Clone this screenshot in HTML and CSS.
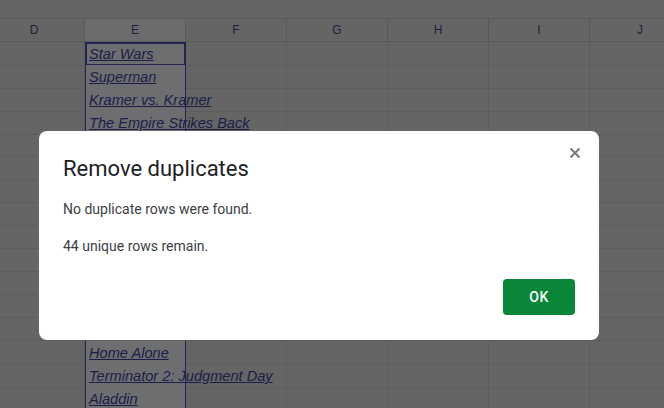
FILE: index.html
```html
<!DOCTYPE html>
<html>
<head>
<meta charset="utf-8">
<link rel="stylesheet" href="styles.css">
</head>
<body>
<div class="sheet">
  <div class="topbar"></div>
  <div class="row head">
    <div class="cell">D</div>
    <div class="cell sel">E</div>
    <div class="cell">F</div>
    <div class="cell">G</div>
    <div class="cell">H</div>
    <div class="cell">I</div>
    <div class="cell">J</div>
  </div>
  <div class="row"><div class="cell"></div><div class="cell sel active"><span class="t">Star Wars</span></div><div class="cell"></div><div class="cell"></div><div class="cell"></div><div class="cell"></div><div class="cell"></div></div>
  <div class="row"><div class="cell"></div><div class="cell sel"><span class="t">Superman</span></div><div class="cell"></div><div class="cell"></div><div class="cell"></div><div class="cell"></div><div class="cell"></div></div>
  <div class="row"><div class="cell"></div><div class="cell sel"><span class="t">Kramer vs. Kramer</span></div><div class="cell"></div><div class="cell"></div><div class="cell"></div><div class="cell"></div><div class="cell"></div></div>
  <div class="row"><div class="cell"></div><div class="cell sel"><span class="t">The Empire Strikes Back</span></div><div class="cell"></div><div class="cell"></div><div class="cell"></div><div class="cell"></div><div class="cell"></div></div>
  <div class="row"><div class="cell"></div><div class="cell sel"></div><div class="cell"></div><div class="cell"></div><div class="cell"></div><div class="cell"></div><div class="cell"></div></div>
  <div class="row"><div class="cell"></div><div class="cell sel"></div><div class="cell"></div><div class="cell"></div><div class="cell"></div><div class="cell"></div><div class="cell"></div></div>
  <div class="row"><div class="cell"></div><div class="cell sel"></div><div class="cell"></div><div class="cell"></div><div class="cell"></div><div class="cell"></div><div class="cell"></div></div>
  <div class="row"><div class="cell"></div><div class="cell sel"></div><div class="cell"></div><div class="cell"></div><div class="cell"></div><div class="cell"></div><div class="cell"></div></div>
  <div class="row"><div class="cell"></div><div class="cell sel"></div><div class="cell"></div><div class="cell"></div><div class="cell"></div><div class="cell"></div><div class="cell"></div></div>
  <div class="row"><div class="cell"></div><div class="cell sel"></div><div class="cell"></div><div class="cell"></div><div class="cell"></div><div class="cell"></div><div class="cell"></div></div>
  <div class="row"><div class="cell"></div><div class="cell sel"></div><div class="cell"></div><div class="cell"></div><div class="cell"></div><div class="cell"></div><div class="cell"></div></div>
  <div class="row"><div class="cell"></div><div class="cell sel"></div><div class="cell"></div><div class="cell"></div><div class="cell"></div><div class="cell"></div><div class="cell"></div></div>
  <div class="row"><div class="cell"></div><div class="cell sel"></div><div class="cell"></div><div class="cell"></div><div class="cell"></div><div class="cell"></div><div class="cell"></div></div>
  <div class="row"><div class="cell"></div><div class="cell sel"><span class="t">Home Alone</span></div><div class="cell"></div><div class="cell"></div><div class="cell"></div><div class="cell"></div><div class="cell"></div></div>
  <div class="row"><div class="cell"></div><div class="cell sel"><span class="t">Terminator 2: Judgment Day</span></div><div class="cell"></div><div class="cell"></div><div class="cell"></div><div class="cell"></div><div class="cell"></div></div>
  <div class="row"><div class="cell"></div><div class="cell sel"><span class="t">Aladdin</span></div><div class="cell"></div><div class="cell"></div><div class="cell"></div><div class="cell"></div><div class="cell"></div></div>
</div>

<div class="dialog" role="dialog">
  <div class="dlg-head">
    <h1 class="title">Remove duplicates</h1>
    <button class="close" aria-label="Close">
      <svg width="12" height="12" viewBox="0 0 12 12"><path d="M1.5 1.5 L10.5 10.5 M10.5 1.5 L1.5 10.5" stroke="#7a7a7a" stroke-width="2" fill="none"/></svg>
    </button>
  </div>
  <p class="msg">No duplicate rows were found.</p>
  <p class="msg">44 unique rows remain.</p>
  <div class="actions">
    <button class="ok">OK</button>
  </div>
</div>
</body>
</html>
```

FILE: styles.css
```css
html, body {
  margin: 0;
  padding: 0;
  width: 664px;
  height: 408px;
  overflow: hidden;
  background: #656565;
  font-family: "Liberation Sans", Arial, sans-serif;
}

.sheet {
  position: relative;
  margin-left: -16px;
}

.topbar {
  height: 18px;
}

.row {
  display: grid;
  grid-template-columns: repeat(7, 101px);
  height: 23px;
}

.row.head {
  height: 24px;
  border-top: 1px solid #595a5e;
  border-bottom: 1px solid #595a5e;
  box-sizing: border-box;
}

.cell {
  position: relative;
  box-sizing: border-box;
  border-right: 1px solid #5c5c61;
  border-bottom: 1px solid #5d5d61;
  white-space: nowrap;
  overflow: visible;
}

.head .cell {
  border-bottom: none;
  border-right-color: #58585d;
  display: flex;
  align-items: center;
  justify-content: center;
  font-size: 12px;
  color: #1c1e3c;
}

.cell.sel {
  background: #6e6e71;
  border-left: 1px solid #22254d;
  border-right: 1px solid #22254d;
  border-bottom-color: #636368;
  z-index: 2;
}

.head .cell.sel {
  border-left: none;
  border-right: 1px solid #58585d;
  background: #6c6c6f;
}

.cell.active {
  box-shadow: inset 0 0 0 1px #22254d;
  border-top: 1px solid #22254d;
  border-bottom: 1px solid #22254d;
}

.t {
  display: block;
  padding: 2px 0 0 3px;
  line-height: 21px;
  font-size: 14.6px;
  font-style: italic;
  text-decoration: underline;
  color: #1a1d48;
}

.active .t {
  padding-top: 1px;
}

.dialog {
  position: absolute;
  left: 39px;
  top: 131px;
  width: 560px;
  height: 209px;
  box-sizing: border-box;
  background: #ffffff;
  border-radius: 8px;
  padding: 22px 24px 24px 24px;
  display: flex;
  flex-direction: column;
  font-family: Roboto, "Liberation Sans", Arial, sans-serif;
  z-index: 10;
}

.dlg-head {
  display: flex;
  justify-content: space-between;
  align-items: flex-start;
}

.title {
  margin: 0;
  font-size: 22px;
  font-weight: 400;
  line-height: 32px;
  color: #202124;
}

.close {
  border: none;
  background: none;
  padding: 0;
  width: 12px;
  height: 12px;
  display: flex;
  margin: -6px -6px 0 0;
}

.msg {
  margin: 0;
  font-size: 14px;
  line-height: 20px;
  color: #3c4043;
}

.msg:first-of-type {
  margin-top: 14px;
}

.msg + .msg {
  margin-top: 17px;
}

.actions {
  margin-top: auto;
  display: flex;
  justify-content: flex-end;
}

.ok {
  width: 72px;
  height: 36px;
  border: none;
  border-radius: 4px;
  background: #0a8638;
  color: #ffffff;
  font-family: Roboto, "Liberation Sans", Arial, sans-serif;
  font-size: 14px;
  font-weight: 500;
  letter-spacing: 0.4px;
  margin-bottom: 1px;
}
```
